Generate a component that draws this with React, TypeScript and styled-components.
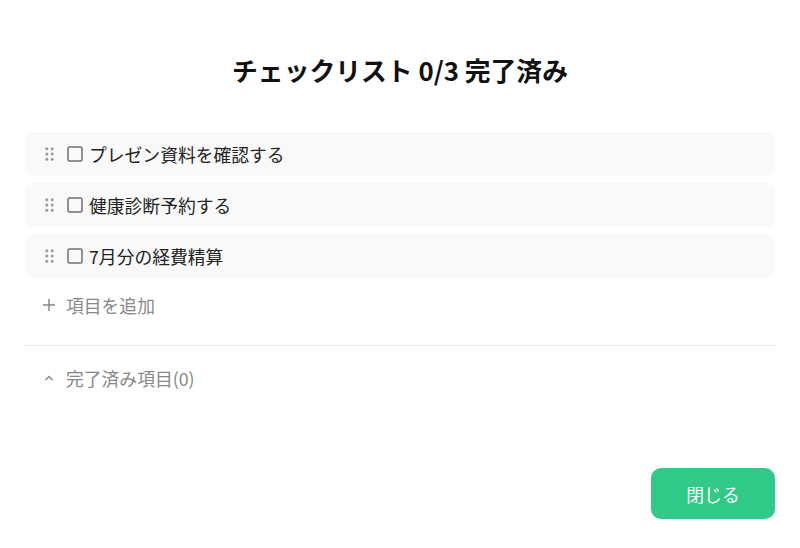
import React from 'react';
import styled, { createGlobalStyle } from 'styled-components';

const GlobalStyle = createGlobalStyle`
  html, body {
    margin: 0;
    padding: 0;
    background: #ffffff;
  }
  body {
    font-family: 'Noto Sans CJK JP', 'Noto Sans', sans-serif;
    color: #222222;
  }
`;

const Dialog = styled.div`
  height: 548px;
  box-sizing: border-box;
  padding: 0 25px 29px;
  display: flex;
  flex-direction: column;
`;

const Title = styled.h1`
  margin: 51px 0 44px;
  height: 37px;
  line-height: 37px;
  text-align: center;
  font-size: 25.8px;
  font-weight: 700;
  color: #111111;
`;

const List = styled.div`
  display: flex;
  flex-direction: column;
  gap: 7px;
`;

const Row = styled.div`
  height: 44px;
  display: flex;
  align-items: center;
  padding-left: 20px;
  background: #f9f9f9;
  border-radius: 9px;
  font-size: 17.8px;
`;

const Handle = styled.svg`
  width: 9px;
  height: 14px;
  margin-right: 13px;
  flex-shrink: 0;
`;

const Box = styled.svg`
  width: 16px;
  height: 16px;
  margin-right: 6px;
  flex-shrink: 0;
`;

const ActionRow = styled.div<{ $top: number }>`
  height: 44px;
  margin-top: ${({ $top }) => $top}px;
  display: flex;
  align-items: center;
  padding-left: 17px;
  color: #888888;
  font-size: 17.8px;
`;

const ActionIcon = styled.svg`
  width: 14px;
  height: 14px;
  margin-right: 10px;
  flex-shrink: 0;
`;

const Divider = styled.hr`
  margin: 18px 0 0;
  border: none;
  border-top: 1px solid #e8e8e8;
`;

const Footer = styled.div`
  margin-top: auto;
  display: flex;
  justify-content: flex-end;
`;

const CloseButton = styled.button`
  width: 124px;
  height: 51px;
  border: none;
  border-radius: 10px;
  background: #30c987;
  color: #ffffff;
  font-family: inherit;
  font-size: 17.8px;
  cursor: pointer;
`;

const items = ['プレゼン資料を確認する', '健康診断予約する', '7月分の経費精算'];

const DragHandle = () => (
  <Handle viewBox="0 0 9 14">
    {[1.8, 7, 12.2].map((y) =>
      [1.8, 7.2].map((x) => <circle key={`${x}-${y}`} cx={x} cy={y} r="1.5" fill="#9a9a9a" />)
    )}
  </Handle>
);

const CheckBox = () => (
  <Box viewBox="0 0 16 16">
    <rect x="1" y="1" width="14" height="14" rx="1.5" fill="none" stroke="#707070" strokeWidth="1.5" />
  </Box>
);

export default function App() {
  return (
    <>
      <GlobalStyle />
      <Dialog>
        <Title>チェックリスト 0/3 完了済み</Title>
        <List>
          {items.map((item) => (
            <Row key={item}>
              <DragHandle />
              <CheckBox />
              <span>{item}</span>
            </Row>
          ))}
        </List>
        <ActionRow $top={5}>
          <ActionIcon viewBox="0 0 14 14">
            <path d="M7 1v12M1 7h12" stroke="#888" strokeWidth="1.5" fill="none" />
          </ActionIcon>
          <span>項目を追加</span>
        </ActionRow>
        <Divider />
        <ActionRow $top={10}>
          <ActionIcon viewBox="0 0 14 14">
            <path d="M3.5 9l3.5-3.5 3.5 3.5" stroke="#888" strokeWidth="1.5" fill="none" />
          </ActionIcon>
          <span>完了済み項目(0)</span>
        </ActionRow>
        <Footer>
          <CloseButton>閉じる</CloseButton>
        </Footer>
      </Dialog>
    </>
  );
}
